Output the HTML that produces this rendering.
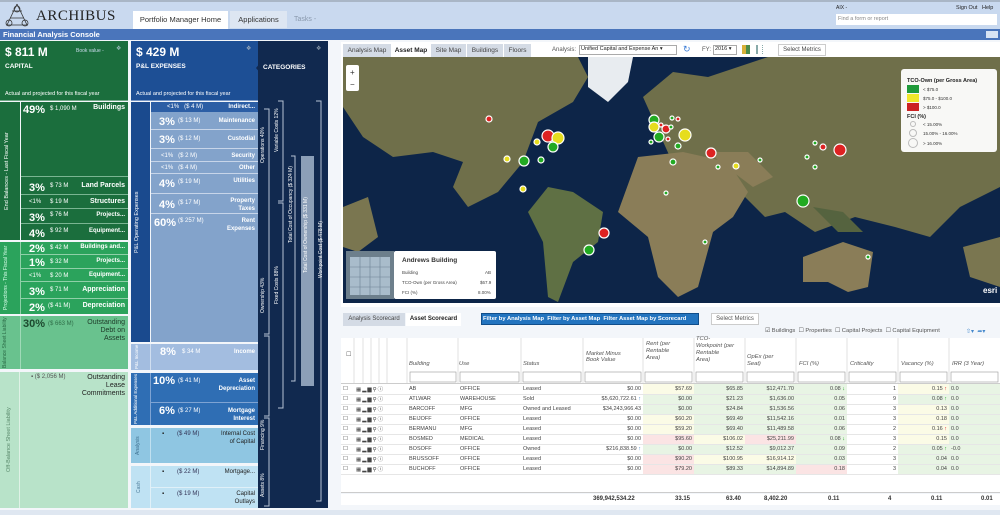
<!DOCTYPE html>
<html><head><meta charset="utf-8"><style>
*{margin:0;padding:0;box-sizing:border-box}
body{width:1000px;height:515px;overflow:hidden;background:#f3f6fa;font-family:"Liberation Sans",sans-serif;position:relative;font-size:7px;color:#222}
.a{position:absolute}
.w{color:#fff}
.b{font-weight:bold}
.vt{position:absolute;writing-mode:vertical-rl;transform:rotate(180deg);white-space:nowrap;text-align:center}
.row{position:absolute;left:0;right:0}
.pct{position:absolute;font-weight:bold;font-size:11px}
.amt{position:absolute;font-size:6px}
.lbl{position:absolute;right:3px;font-weight:bold;font-size:7px;text-align:right;line-height:8px}
table{border-collapse:collapse}
.tb td{height:10px;font-size:5.5px;color:#444;border-bottom:1px solid #e6e6e6;padding:0 2px;white-space:nowrap;overflow:hidden}
.r{text-align:right}
.ic{color:#2a5d96;font-size:6px;letter-spacing:1px}
</style></head><body>
<div class="a" style="left:0;top:0;width:1000px;height:29px;background:#c9d9ef;border-top:2px solid #a9b6c6"></div>
<svg class="a" style="left:4px;top:3px" width="26" height="24" viewBox="0 0 26 24"><g fill="none" stroke="#333" stroke-width="0.8"><path d="M13 1L3 22M13 1l10 21M6 15h14M2 22h22M8 8h10"/><circle cx="13" cy="6" r="3"/><circle cx="5" cy="20" r="3"/><circle cx="21" cy="20" r="3"/></g></svg>
<div class="a" style="left:36px;top:8px;font-family:'Liberation Serif',serif;font-size:15px;color:#222;letter-spacing:0.5px">ARCHIBUS</div>
<div class="a" style="left:133px;top:11px;width:95px;height:18px;background:#fff;font-size:7.5px;text-align:center;line-height:18px;color:#333">Portfolio Manager Home</div>
<div class="a" style="left:230px;top:11px;width:57px;height:17px;background:#dde6f2;font-size:7.5px;text-align:center;line-height:17px;color:#333">Applications</div>
<div class="a" style="left:294px;top:16px;font-size:7px;color:#8a99ad">Tasks -</div>
<div class="a" style="left:836px;top:5px;font-size:5px">AIX -</div>
<div class="a" style="left:956px;top:5px;font-size:5.5px">Sign Out &nbsp; Help</div>
<div class="a" style="left:836px;top:14px;width:161px;height:11px;background:#fff;font-size:5.5px;color:#888;padding:2px">Find a form or report</div>
<div class="a" style="left:0;top:29px;width:1000px;height:11px;background:#4a75bb;color:#fff;font-weight:bold;font-size:7.5px;padding-left:3px;line-height:11px">Financial Analysis Console</div>
<div class="a" style="left:986px;top:31px;width:12px;height:7px;background:#d8e4f4"></div>

<div class="a" style="left:0;top:41px;width:128px;height:59px;background:#1b6e3d"></div>
<div class="a w b" style="left:5px;top:45px;font-size:12px">$ 811 M</div>
<div class="a w" style="left:76px;top:48px;font-size:5px;color:#cde">Book value -</div>
<div class="a" style="left:116px;top:45px;font-size:6px;color:#9bb">&#10070;</div>
<div class="a w b" style="left:5px;top:63px;font-size:6.5px">CAPITAL</div>
<div class="a w" style="left:5px;top:91px;font-size:5.5px">Actual and projected for this fiscal year</div>
<div class="a" style="left:0;top:100px;width:128px;height:1px;background:#6fa886"></div>
<div class="a" style="left:0;top:102px;width:20px;height:138px;background:#1b6e3d"></div>
<div class="vt w" style="left:4px;top:102px;height:138px;font-size:5.5px">End Balances - Last Fiscal Year</div>
<div class="a" style="left:21px;top:102px;width:107px;height:138px;background:#1b6e3d">
 <div class="row" style="top:0;height:75px;border-bottom:1px solid #7ab592"><span class="pct w" style="left:2px;top:2px">49%</span><span class="amt w" style="left:29px;top:4px">$ 1,090 M</span><span class="lbl w" style="top:2px">Buildings</span></div>
 <div class="row" style="top:77px;height:16px;border-bottom:1px solid #7ab592"><span class="pct w" style="left:8px;top:3px">3%</span><span class="amt w" style="left:29px;top:4px">$ 73 M</span><span class="lbl w" style="top:3px">Land Parcels</span></div>
 <div class="row" style="top:94px;height:13px;border-bottom:1px solid #7ab592"><span class="amt w" style="left:8px;top:3px">&lt;1%</span><span class="amt w" style="left:29px;top:3px">$ 19 M</span><span class="lbl w" style="top:2px">Structures</span></div>
 <div class="row" style="top:108px;height:14px;border-bottom:1px solid #7ab592"><span class="pct w" style="left:8px;top:2px">3%</span><span class="amt w" style="left:29px;top:2px">$ 76 M</span><span class="lbl w" style="top:1px;font-size:6px">Projects...</span></div>
 <div class="row" style="top:123px;height:15px"><span class="pct w" style="left:8px;top:3px">4%</span><span class="amt w" style="left:29px;top:3px">$ 92 M</span><span class="lbl w" style="top:2px;font-size:6px">Equipment...</span></div>
</div>
<div class="a" style="left:0;top:242px;width:128px;height:72px;background:#2ba35c"></div>
<div class="vt w" style="left:3px;top:242px;height:72px;font-size:5px;color:#dfe">Projections - This Fiscal Year</div>
<div class="a" style="left:20px;top:242px;width:1px;height:72px;background:#8fd0a8"></div>
<div class="a" style="left:21px;top:242px;width:107px;height:72px">
 <div class="row" style="top:0;height:13px;border-bottom:1px solid #8fd0a8"><span class="pct w" style="left:8px;top:1px">2%</span><span class="amt w" style="left:29px;top:3px">$ 42 M</span><span class="lbl w" style="top:1px;font-size:6px">Buildings and...</span></div>
 <div class="row" style="top:14px;height:13px;border-bottom:1px solid #8fd0a8"><span class="pct w" style="left:8px;top:1px">1%</span><span class="amt w" style="left:29px;top:3px">$ 32 M</span><span class="lbl w" style="top:1px;font-size:6px">Projects...</span></div>
 <div class="row" style="top:28px;height:12px;border-bottom:1px solid #8fd0a8"><span class="amt w" style="left:8px;top:3px">&lt;1%</span><span class="amt w" style="left:29px;top:3px">$ 20 M</span><span class="lbl w" style="top:1px;font-size:6px">Equipment...</span></div>
 <div class="row" style="top:41px;height:16px;border-bottom:1px solid #8fd0a8"><span class="pct w" style="left:8px;top:3px">3%</span><span class="amt w" style="left:29px;top:4px">$ 71 M</span><span class="lbl w" style="top:3px">Appreciation</span></div>
 <div class="row" style="top:58px;height:14px"><span class="pct w" style="left:8px;top:2px">2%</span><span class="amt w" style="left:27px;top:3px">($ 41 M)</span><span class="lbl w" style="top:2px">Depreciation</span></div>
</div>
<div class="a" style="left:0;top:316px;width:128px;height:53px;background:#69c28e"></div>
<div class="vt" style="left:2px;top:316px;height:53px;font-size:5px;color:#2a6a45">Balance Sheet Liability</div>
<div class="a" style="left:20px;top:316px;width:1px;height:53px;background:#a0dab8"></div>
<span class="pct" style="left:23px;top:318px;color:#1d4a2f">30%</span><span class="amt" style="left:48px;top:321px;color:#2f6e48">($ 663 M)</span>
<div class="lbl" style="left:0;width:125px;top:319px;right:auto;color:#1d3a28;font-weight:normal">Outstanding<br>Debt on<br>Assets</div>
<div class="a" style="left:0;top:372px;width:128px;height:136px;background:#b8e3c9"></div>
<div class="vt" style="left:6px;top:372px;height:136px;font-size:5.5px;color:#5a8a6c">Off-Balance Sheet Liability</div>
<div class="a" style="left:19px;top:372px;width:1px;height:136px;background:#dff2e6"></div>
<span class="amt" style="left:31px;top:374px;color:#555">&#9642; ($ 2,056 M)</span>
<div class="lbl" style="left:0;width:125px;top:374px;right:auto;color:#222;font-weight:normal">Outstanding<br>Lease<br>Commitments</div>

<div class="a" style="left:131px;top:41px;width:127px;height:59px;background:#1d4f95"></div>
<div class="a w b" style="left:136px;top:45px;font-size:12px">$ 429 M</div>
<div class="a" style="left:246px;top:45px;font-size:6px;color:#9ab">&#10070;</div>
<div class="a w b" style="left:136px;top:63px;font-size:6.5px">P&amp;L EXPENSES</div>
<div class="a w" style="left:136px;top:91px;font-size:5.5px">Actual and projected for this fiscal year</div>
<div class="a" style="left:131px;top:100px;width:127px;height:1px;background:#7897c6"></div>
<div class="a" style="left:131px;top:102px;width:19px;height:240px;background:#1a4a8e"></div>
<div class="vt w" style="left:134px;top:102px;height:240px;font-size:5.5px">P&amp;L Operating Expenses</div>
<div class="a" style="left:151px;top:102px;width:107px;height:240px;background:#83a3cb">
 <div class="row" style="top:0;height:10px;background:#2c5ea5;color:#fff"><span class="amt" style="left:16px;top:2px">&lt;1% &nbsp; ($ 4 M)</span><span class="lbl w" style="top:1px;font-size:6px">Indirect...</span></div>
 <div class="row" style="top:11px;height:17px;border-bottom:1px solid #c7d5e9"><span class="pct w" style="left:8px;top:3px">3%</span><span class="amt w" style="left:27px;top:5px">($ 13 M)</span><span class="lbl w" style="top:4px;font-size:6px">Maintenance</span></div>
 <div class="row" style="top:29px;height:18px;border-bottom:1px solid #c7d5e9"><span class="pct w" style="left:8px;top:3px">3%</span><span class="amt w" style="left:27px;top:5px">($ 12 M)</span><span class="lbl w" style="top:4px;font-size:6px">Custodial</span></div>
 <div class="row" style="top:48px;height:12px;border-bottom:1px solid #c7d5e9"><span class="amt w" style="left:10px;top:3px">&lt;1% &nbsp; ($ 2 M)</span><span class="lbl w" style="top:2px;font-size:6px">Security</span></div>
 <div class="row" style="top:61px;height:11px;border-bottom:1px solid #c7d5e9"><span class="amt w" style="left:10px;top:2px">&lt;1% &nbsp; ($ 4 M)</span><span class="lbl w" style="top:1px;font-size:6px">Other</span></div>
 <div class="row" style="top:73px;height:19px;border-bottom:1px solid #c7d5e9"><span class="pct w" style="left:8px;top:3px">4%</span><span class="amt w" style="left:27px;top:4px">($ 19 M)</span><span class="lbl w" style="top:2px;font-size:6px">Utilities</span></div>
 <div class="row" style="top:93px;height:19px;border-bottom:1px solid #c7d5e9"><span class="pct w" style="left:8px;top:4px">4%</span><span class="amt w" style="left:27px;top:5px">($ 17 M)</span><span class="lbl w" style="top:2px;font-size:6px">Property<br>Taxes</span></div>
 <div class="row" style="top:113px;height:127px"><span class="pct w" style="left:3px;top:2px">60%</span><span class="amt w" style="left:27px;top:3px">($ 257 M)</span><span class="lbl w" style="top:2px;font-size:6px">Rent<br>Expenses</span></div>
</div>
<div class="a" style="left:131px;top:344px;width:127px;height:26px;background:#a3bde0"></div>
<div class="vt w" style="left:134px;top:344px;height:26px;font-size:4.5px">P&amp;L Income</div>
<div class="a" style="left:150px;top:344px;width:1px;height:26px;background:#d0def0"></div>
<span class="pct w" style="left:160px;top:346px">8%</span><span class="amt w" style="left:182px;top:349px">$ 34 M</span><span class="lbl w" style="left:0;right:auto;width:255px;top:348px;font-size:6px">Income</span>
<div class="a" style="left:131px;top:373px;width:127px;height:52px;background:#2f6eb4"></div>
<div class="vt w" style="left:133px;top:373px;height:52px;font-size:4.5px">P&amp;L Additional Expenses</div>
<div class="a" style="left:150px;top:373px;width:1px;height:52px;background:#7ea3d3"></div>
<div class="a" style="left:151px;top:402px;width:107px;height:1px;background:#7ea3d3"></div>
<span class="pct w" style="left:153px;top:375px">10%</span><span class="amt w" style="left:178px;top:378px">($ 41 M)</span><span class="lbl w" style="left:0;right:auto;width:255px;top:377px;font-size:6px">Asset<br>Depreciation</span>
<span class="pct w" style="left:159px;top:405px">6%</span><span class="amt w" style="left:178px;top:408px">($ 27 M)</span><span class="lbl w" style="left:0;right:auto;width:255px;top:407px;font-size:6px">Mortgage<br>Interest</span>
<div class="a" style="left:131px;top:428px;width:127px;height:35px;background:#8fc6e2"></div>
<div class="vt" style="left:135px;top:428px;height:35px;font-size:5px;color:#3d6f8e">Analysis</div>
<div class="a" style="left:150px;top:428px;width:1px;height:35px;background:#c0e0f0"></div>
<span class="amt" style="left:162px;top:431px">&#9642;</span><span class="amt" style="left:177px;top:431px;color:#335">($ 49 M)</span><span class="lbl" style="left:0;right:auto;width:255px;top:430px;font-size:6px;font-weight:normal">Internal Cost<br>of Capital</span>
<div class="a" style="left:131px;top:466px;width:127px;height:42px;background:#bfe2f3"></div>
<div class="vt" style="left:136px;top:466px;height:42px;font-size:5px;color:#4d7c9a">Cash</div>
<div class="a" style="left:150px;top:466px;width:1px;height:42px;background:#e0f0f8"></div>
<div class="a" style="left:151px;top:487px;width:107px;height:1px;background:#e0f0f8"></div>
<span class="amt" style="left:162px;top:469px">&#9642;</span><span class="amt" style="left:177px;top:469px;color:#335">($ 22 M)</span><span class="lbl" style="left:0;right:auto;width:255px;top:468px;font-size:6px;font-weight:normal">Mortgage...</span>
<span class="amt" style="left:162px;top:491px">&#9642;</span><span class="amt" style="left:177px;top:491px;color:#335">($ 19 M)</span><span class="lbl" style="left:0;right:auto;width:255px;top:490px;font-size:6px;font-weight:normal">Capital<br>Outlays</span>

<div class="a" style="left:258px;top:41px;width:70px;height:467px;background:#11294f"></div>
<div class="a" style="left:256px;top:62px;width:0;height:0;border-top:6px solid transparent;border-bottom:6px solid transparent;border-right:5px solid #11294f"></div>
<div class="a w b" style="left:263px;top:64px;font-size:6.5px">CATEGORIES</div>
<div class="a" style="left:316px;top:45px;font-size:6px;color:#8899aa">&#10070;</div>
<svg class="a" style="left:258px;top:41px" width="70" height="467"><g fill="none" stroke="#b8c4d4" stroke-width="1">
<path d="M6 68h5v225h-5M6 295h5v80h-5M6 377h5v88h-5M20 60h5v100h-5M20 162h5v205h-5M33 115h4v225h-4M58 60h5v400h-5"/></g>
<rect x="43" y="115" width="13" height="230" fill="#8c9fb8"/></svg>
<div class="vt w" style="left:260px;top:110px;height:70px;font-size:5px">Operations 40%</div>
<div class="vt w" style="left:260px;top:260px;height:70px;font-size:5px">Ownership 43%</div>
<div class="vt w" style="left:260px;top:405px;height:60px;font-size:5px">Financing 9%</div>
<div class="vt w" style="left:260px;top:465px;height:40px;font-size:5px">Assets 8%</div>
<div class="vt w" style="left:274px;top:100px;height:60px;font-size:5px">Variable Costs 12%</div>
<div class="vt w" style="left:274px;top:250px;height:70px;font-size:5px">Fixed Costs 88%</div>
<div class="vt w" style="left:288px;top:140px;height:130px;font-size:5px">Total Cost of Occupancy ($ 324 M)</div>
<div class="vt w" style="left:303px;top:170px;height:130px;font-size:5px">Total Cost of Ownership ($ 331 M)</div>
<div class="vt w" style="left:318px;top:190px;height:120px;font-size:5px">Workpoint Cost ($ 478 M)</div>

<div class="a" style="left:341px;top:42px;width:659px;height:265px;background:#fff"></div>
<div class="a" style="left:343px;top:44px;width:48px;height:13px;background:#d4dbe5;font-size:6.5px;line-height:13px;text-align:center;color:#444">Analysis Map</div>
<div class="a" style="left:392px;top:44px;width:38px;height:13px;background:#fff;font-size:6.5px;line-height:13px;text-align:center;font-weight:bold">Asset Map</div>
<div class="a" style="left:431px;top:44px;width:35px;height:13px;background:#d4dbe5;font-size:6.5px;line-height:13px;text-align:center;color:#444">Site Map</div>
<div class="a" style="left:467px;top:44px;width:36px;height:13px;background:#d4dbe5;font-size:6.5px;line-height:13px;text-align:center;color:#444">Buildings</div>
<div class="a" style="left:504px;top:44px;width:27px;height:13px;background:#d4dbe5;font-size:6.5px;line-height:13px;text-align:center;color:#444">Floors</div>
<div class="a" style="left:552px;top:47px;font-size:6px;color:#555">Analysis:</div>
<div class="a" style="left:579px;top:45px;width:98px;height:10px;border:1px solid #aaa;font-size:5.5px;padding-left:1px;background:#fff">Unified Capital and Expense An ▾</div>
<div class="a" style="left:683px;top:44px;font-size:9px;color:#3a7bd5">&#8635;</div>
<div class="a" style="left:702px;top:47px;font-size:6px;color:#555">FY:</div>
<div class="a" style="left:713px;top:45px;width:24px;height:10px;border:1px solid #aaa;font-size:5.5px;padding-left:1px;background:#fff">2016 ▾</div>
<div class="a" style="left:742px;top:45px;width:8px;height:9px;background:linear-gradient(90deg,#d8b13a 50%,#4c8d4c 50%)"></div>
<div class="a" style="left:756px;top:45px;width:7px;height:9px;border-left:2px solid #8aa;border-right:1px dotted #8aa"></div>
<div class="a" style="left:778px;top:44px;width:48px;height:12px;border:1px solid #ccc;font-size:6px;line-height:11px;text-align:center;color:#444">Select Metrics</div>
<svg class="a" style="left:343px;top:57px" width="657" height="246" viewBox="0 0 657 246">
<rect width="657" height="246" fill="#0d2548"/>
<g fill="#6f6f4a">
<path d="M0 0h235l10 20-15 25-35 20-15 40-25 30-30 15-15-20 10-25-30-10-40 5-30-20-20-30z"/>
<path d="M245 0h45l-5 25-20 20-20-15z" fill="#e8ecf0"/>
<path d="M300 40l30-25 35 5 60-20h232v130l-40 20-30 30-35-10-40-10-40 15-30-20-20 5-20-20-30 5-10-20-20 5-15-30z"/>
<path d="M295 100l45-5 45 10 20 30-15 25-20 15-15 55-20 10-20-20-10-40-30-25z" fill="#8a7d58"/>
<path d="M365 95l40 0 25 25-20 10-20-15z" fill="#8a7d58"/>
<path d="M205 130l25 5 30 20-5 30-25 20-15 40-10-5-5-55-15-30z" fill="#5f7044"/>
<path d="M460 200l40-15 30 10-5 35-20 5-20-10-25 0z" fill="#8a7d58"/>
<path d="M0 150l25-10 10 40-20 15-15-5z" fill="#7a7650"/>
<path d="M620 190l37-10v50l-30-10z" fill="#7a7650"/>
<path d="M470 150l30 5 20 20-25 0z" fill="#55633f"/>
</g>
<g stroke="#fff" stroke-width="1.2">
<circle cx="146" cy="62" r="3" fill="#d22"/>
<circle cx="205" cy="79" r="6" fill="#d22"/><circle cx="215" cy="81" r="6" fill="#e6dd1e"/>
<circle cx="194" cy="85" r="3" fill="#e6dd1e"/><circle cx="210" cy="90" r="5" fill="#2a2"/>
<circle cx="164" cy="102" r="3" fill="#e6dd1e"/><circle cx="181" cy="104" r="5" fill="#2a2"/><circle cx="198" cy="103" r="3" fill="#2a2"/>
<circle cx="180" cy="132" r="3" fill="#e6dd1e"/>
<circle cx="311" cy="63" r="5" fill="#2a2"/><circle cx="311" cy="70" r="5" fill="#e6dd1e"/><circle cx="318" cy="68" r="2" fill="#d22"/>
<circle cx="323" cy="72" r="4" fill="#d22"/><circle cx="328" cy="70" r="2" fill="#2a2"/><circle cx="329" cy="61" r="2" fill="#2a2"/><circle cx="335" cy="62" r="2" fill="#d22"/>
<circle cx="316" cy="80" r="5" fill="#2a2"/><circle cx="342" cy="78" r="6" fill="#e6dd1e"/><circle cx="325" cy="82" r="2" fill="#d22"/>
<circle cx="308" cy="85" r="2" fill="#2a2"/><circle cx="335" cy="89" r="3" fill="#2a2"/>
<circle cx="472" cy="86" r="2" fill="#2a2"/><circle cx="480" cy="90" r="3" fill="#d22"/><circle cx="497" cy="93" r="6" fill="#d22"/>
<circle cx="464" cy="100" r="2" fill="#2a2"/><circle cx="393" cy="109" r="3" fill="#e6dd1e"/><circle cx="368" cy="96" r="5" fill="#d22"/><circle cx="417" cy="103" r="2" fill="#2a2"/>
<circle cx="472" cy="110" r="2" fill="#2a2"/><circle cx="375" cy="110" r="2" fill="#2a2"/><circle cx="323" cy="136" r="2" fill="#2a2"/>
<circle cx="460" cy="144" r="6" fill="#2a2"/><circle cx="261" cy="176" r="5" fill="#d22"/><circle cx="246" cy="193" r="5" fill="#2a2"/>
<circle cx="362" cy="185" r="2" fill="#2a2"/><circle cx="525" cy="200" r="2" fill="#2a2"/>
<circle cx="330" cy="105" r="3" fill="#2a2"/>
</g>
<rect x="3" y="8" width="13" height="26" rx="2" fill="#fff"/><text x="7" y="18" font-size="8" fill="#333">+</text><text x="7" y="30" font-size="8" fill="#333">−</text>
<g transform="translate(558,12)"><rect width="96" height="83" rx="3" fill="#fff" opacity="0.95"/>
<text x="6" y="13" font-size="5.5" font-weight="bold" fill="#222" font-family="Liberation Sans">TCO-Own (per Gross Area)</text>
<rect x="6" y="16" width="12" height="8" fill="#1f9a3a"/><text x="22" y="22" font-size="4.5" fill="#333">&lt; $75.0</text>
<rect x="6" y="25" width="12" height="8" fill="#f0e82a"/><text x="22" y="31" font-size="4.5" fill="#333">$75.0 - $100.0</text>
<rect x="6" y="34" width="12" height="8" fill="#cc2222"/><text x="22" y="40" font-size="4.5" fill="#333">&gt; $100.0</text>
<text x="6" y="49" font-size="5.5" font-weight="bold" fill="#222">FCI (%)</text>
<circle cx="12" cy="55" r="2.5" fill="none" stroke="#bbb"/><text x="22" y="57" font-size="4.5" fill="#333">&lt; 15.00%</text>
<circle cx="12" cy="64" r="3.5" fill="none" stroke="#bbb"/><text x="22" y="66" font-size="4.5" fill="#333">15.00% - 16.00%</text>
<circle cx="12" cy="74" r="4.5" fill="none" stroke="#bbb"/><text x="22" y="76" font-size="4.5" fill="#333">&gt; 16.00%</text></g>
<g transform="translate(3,194)"><rect width="48" height="48" fill="#6d7f8c"/><rect x="4" y="6" width="40" height="38" fill="#a9bccb"/><path d="M4 16h40M4 26h40M4 36h40M14 6v38M24 6v38M34 6v38" stroke="#6d8094" stroke-width="0.6"/>
<rect x="48" width="102" height="48" rx="2" fill="#fff"/>
<text x="56" y="11" font-size="6.5" font-weight="bold" fill="#333">Andrews Building</text>
<text x="56" y="23" font-size="4.5" fill="#444">Building</text><text x="139" y="23" font-size="4.5" fill="#444">AB</text>
<text x="56" y="33" font-size="4.5" fill="#444">TCO-Own (per Gross Area)</text><text x="134" y="33" font-size="4.5" fill="#444">$67.9</text>
<text x="56" y="43" font-size="4.5" fill="#444">FCI (%)</text><text x="132" y="43" font-size="4.5" fill="#444">8.00%</text></g>
<text x="640" y="236" font-size="8" font-weight="bold" fill="#fff">esri</text>
</svg>

<div class="a" style="left:343px;top:313px;width:62px;height:13px;background:#d4dbe5;font-size:6px;line-height:13px;text-align:center;color:#444">Analysis Scorecard</div>
<div class="a" style="left:406px;top:313px;width:55px;height:13px;background:#fff;font-size:6px;line-height:13px;text-align:center;font-weight:bold">Asset Scorecard</div>
<div class="a" style="left:481px;top:313px;width:218px;height:12px;background:#2374bf;border:1px solid #114e8a"></div>
<div class="a w" style="left:483px;top:316px;font-size:5.8px;font-weight:bold">Filter by Analysis Map &nbsp;Filter by Asset Map &nbsp;Filter Asset Map by Scorecard</div>
<div class="a" style="left:711px;top:313px;width:48px;height:12px;border:1px solid #ccc;background:#fff;font-size:6px;line-height:11px;text-align:center;color:#555">Select Metrics</div>
<div class="a" style="left:765px;top:328px;font-size:5.8px;color:#555">&#9745; Buildings &nbsp;&#9744; Properties &nbsp;&#9744; Capital Projects &nbsp;&#9744; Capital Equipment</div>
<div class="a" style="left:966px;top:328px;font-size:6px;color:#48c">&#8679;▾ &nbsp;➦▾</div>
<div class="a" style="left:341px;top:338px;width:659px;height:46px;background:#fff;border-bottom:1px solid #ccc"></div>
<div class="a" style="left:341px;top:338px;width:659px;height:46px;font-size:5.8px;font-style:italic;color:#555">
<span class="a" style="left:5px;top:14px;font-style:normal">&#9744;</span>
<span class="a" style="left:68px;top:23px">Building</span><span class="a" style="left:118px;top:23px">Use</span><span class="a" style="left:182px;top:23px">Status</span>
<span class="a" style="left:245px;top:13px">Market Minus<br>Book Value</span>
<span class="a" style="left:305px;top:3px;line-height:7px">Rent (per<br>Rentable<br>Area)</span>
<span class="a" style="left:355px;top:-2px;line-height:7px">TCO-<br>Workpoint (per<br>Rentable<br>Area)</span>
<span class="a" style="left:406px;top:16px;line-height:7px">OpEx (per<br>Seat)</span>
<span class="a" style="left:458px;top:23px">FCI (%)</span><span class="a" style="left:509px;top:23px">Criticality</span><span class="a" style="left:560px;top:23px">Vacancy (%)</span><span class="a" style="left:611px;top:23px">IRR (3 Year)</span>
</div>
<svg class="a" style="left:341px;top:338px" width="659" height="46"><g fill="none" stroke="#ccc" stroke-width="0.6">
<path d="M13 0v46M22 0v46M30 0v46M38 0v46M46 0v46M66 0v46M117 0v46M180 0v46M242 0v46M302 0v46M353 0v46M404 0v46M455 0v46M506 0v46M557 0v46M608 0v46"/>
<g stroke="#999"><rect x="69" y="34" width="46" height="10"/><rect x="119" y="34" width="59" height="10"/><rect x="182" y="34" width="58" height="10"/><rect x="244" y="34" width="56" height="10"/><rect x="304" y="34" width="47" height="10"/><rect x="355" y="34" width="47" height="10"/><rect x="406" y="34" width="47" height="10"/><rect x="457" y="34" width="47" height="10"/><rect x="508" y="34" width="47" height="10"/><rect x="559" y="34" width="47" height="10"/><rect x="610" y="34" width="47" height="10"/></g></g></svg>
<div class="a" style="left:341px;top:384px;width:659px;height:108px;background:#fff;overflow:hidden">
<table class="a tb" style="left:0;top:0;width:710px;table-layout:fixed">
<colgroup><col style="width:13px"><col style="width:53px"><col style="width:51px"><col style="width:63px"><col style="width:62px"><col style="width:60px"><col style="width:51px"><col style="width:51px"><col style="width:51px"><col style="width:51px"><col style="width:51px"><col style="width:51px"><col style="width:102px"></colgroup>
<tbody>
<tr><td>&#9744;</td><td class="ic">&#9638;&#9602;&#9606;&#9906;&#9432;</td><td>AB</td><td>OFFICE</td><td>Leased</td><td class="r">$0.00</td><td class="r" style="background:#fbfbe6">$57.69</td><td class="r" style="background:#e8f4e4">$65.85</td><td class="r" style="background:#e8f4e4">$12,471.70</td><td class="r" style="background:#e8f4e4">0.08 <b style="color:#2a2">&#8595;</b></td><td class="r">1</td><td class="r" style="background:#fbfbe6">0.15 <b style="color:#d22">&#8593;</b></td><td style="background:#e8f4e4">0.0</td></tr>
<tr><td>&#9744;</td><td class="ic">&#9638;&#9602;&#9606;&#9906;&#9432;</td><td>ATLWAR</td><td>WAREHOUSE</td><td>Sold</td><td class="r">$5,620,722.61 <b style="color:#48c">&#8593;</b></td><td class="r" style="background:#e8f4e4">$0.00</td><td class="r" style="background:#e8f4e4">$21.23</td><td class="r" style="background:#e8f4e4">$1,636.00</td><td class="r" style="background:#e8f4e4">0.05</td><td class="r">9</td><td class="r" style="background:#e8f4e4">0.08 <b style="color:#2a2">&#8593;</b></td><td style="background:#e8f4e4">0.0</td></tr>
<tr><td>&#9744;</td><td class="ic">&#9638;&#9602;&#9606;&#9906;&#9432;</td><td>BARCOFF</td><td>MFG</td><td>Owned and Leased</td><td class="r">$34,243,966.43</td><td class="r" style="background:#e8f4e4">$0.00</td><td class="r" style="background:#e8f4e4">$24.84</td><td class="r" style="background:#e8f4e4">$1,536.56</td><td class="r" style="background:#e8f4e4">0.06</td><td class="r">3</td><td class="r" style="background:#fbfbe6">0.13</td><td style="background:#e8f4e4">0.0</td></tr>
<tr><td>&#9744;</td><td class="ic">&#9638;&#9602;&#9606;&#9906;&#9432;</td><td>BEIJOFF</td><td>OFFICE</td><td>Leased</td><td class="r">$0.00</td><td class="r" style="background:#fbfbe6">$60.20</td><td class="r" style="background:#e8f4e4">$69.49</td><td class="r" style="background:#e8f4e4">$11,542.16</td><td class="r" style="background:#e8f4e4">0.01</td><td class="r">3</td><td class="r" style="background:#fbfbe6">0.18</td><td style="background:#e8f4e4">0.0</td></tr>
<tr><td>&#9744;</td><td class="ic">&#9638;&#9602;&#9606;&#9906;&#9432;</td><td>BERMANU</td><td>MFG</td><td>Leased</td><td class="r">$0.00</td><td class="r" style="background:#fbfbe6">$59.20</td><td class="r" style="background:#e8f4e4">$69.40</td><td class="r" style="background:#e8f4e4">$11,489.58</td><td class="r" style="background:#e8f4e4">0.06</td><td class="r">2</td><td class="r" style="background:#fbfbe6">0.16 <b style="color:#d22">&#8593;</b></td><td style="background:#e8f4e4">0.0</td></tr>
<tr><td>&#9744;</td><td class="ic">&#9638;&#9602;&#9606;&#9906;&#9432;</td><td>BOSMED</td><td>MEDICAL</td><td>Leased</td><td class="r">$0.00</td><td class="r" style="background:#fbe4e4">$95.60</td><td class="r" style="background:#fbfbe6">$106.02</td><td class="r" style="background:#fbe4e4">$25,211.99</td><td class="r" style="background:#e8f4e4">0.08 <b style="color:#2a2">&#8595;</b></td><td class="r">3</td><td class="r" style="background:#fbfbe6">0.15</td><td style="background:#e8f4e4">0.0</td></tr>
<tr><td>&#9744;</td><td class="ic">&#9638;&#9602;&#9606;&#9906;&#9432;</td><td>BOSOFF</td><td>OFFICE</td><td>Owned</td><td class="r">$216,838.59 <b style="color:#48c">&#8593;</b></td><td class="r" style="background:#e8f4e4">$0.00</td><td class="r" style="background:#e8f4e4">$12.52</td><td class="r" style="background:#e8f4e4">$9,012.37</td><td class="r" style="background:#e8f4e4">0.09</td><td class="r">2</td><td class="r" style="background:#e8f4e4">0.05 <b style="color:#2a2">&#8593;</b></td><td style="background:#e8f4e4">-0.0</td></tr>
<tr><td>&#9744;</td><td class="ic">&#9638;&#9602;&#9606;&#9906;&#9432;</td><td>BRUSSOFF</td><td>OFFICE</td><td>Leased</td><td class="r">$0.00</td><td class="r" style="background:#fbe4e4">$90.20</td><td class="r" style="background:#fbfbe6">$100.95</td><td class="r" style="background:#fbfbe6">$16,914.12</td><td class="r" style="background:#e8f4e4">0.03</td><td class="r">3</td><td class="r" style="background:#e8f4e4">0.04</td><td style="background:#e8f4e4">0.0</td></tr>
<tr><td>&#9744;</td><td class="ic">&#9638;&#9602;&#9606;&#9906;&#9432;</td><td>BUCHOFF</td><td>OFFICE</td><td>Leased</td><td class="r">$0.00</td><td class="r" style="background:#fbe4e4">$79.20</td><td class="r" style="background:#e8f4e4">$89.33</td><td class="r" style="background:#e8f4e4">$14,894.89</td><td class="r" style="background:#fbe4e4">0.18</td><td class="r">3</td><td class="r" style="background:#e8f4e4">0.04</td><td style="background:#e8f4e4">0.0</td></tr>
</tbody></table></div>
<div class="a" style="left:341px;top:492px;width:659px;height:1px;background:#ccc"></div>
<div class="a" style="left:341px;top:494px;width:659px;height:11px;background:#fff;font-size:6px;font-weight:bold;color:#333">
<span class="a" style="left:252px;top:2px">369,942,534.22</span><span class="a" style="left:334px;top:2px">33.15</span><span class="a" style="left:385px;top:2px">63.40</span><span class="a" style="left:423px;top:2px">8,402.20</span><span class="a" style="left:487px;top:2px">0.11</span><span class="a" style="left:547px;top:2px">4</span><span class="a" style="left:590px;top:2px">0.11</span><span class="a" style="left:640px;top:2px">0.01</span></div>
<div class="a" style="left:0;top:510px;width:1000px;height:5px;background:#dfe7f1"></div>
</body></html>
